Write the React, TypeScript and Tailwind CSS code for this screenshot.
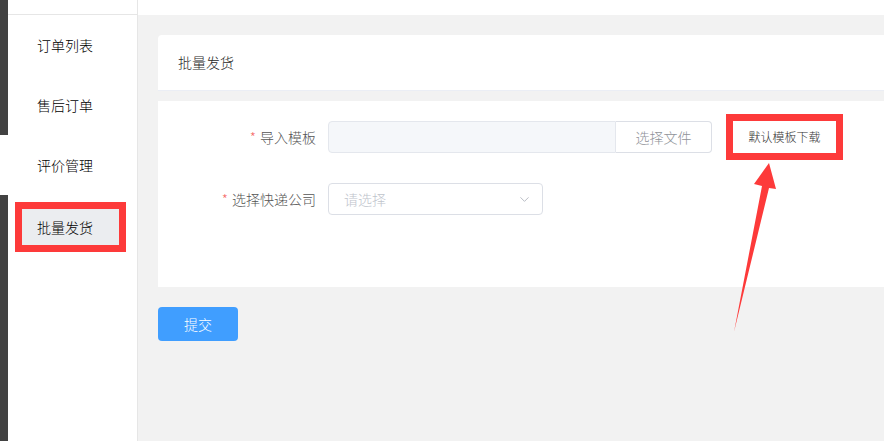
import { ChevronDown } from "lucide-react"

const font = { fontFamily: '"Noto Sans CJK SC", "Noto Sans", sans-serif' }

const menu = ["订单列表", "售后订单", "评价管理"]

export default function App() {
  return (
    <div className="relative flex w-[884px] h-[441px] overflow-hidden bg-white text-[14px]" style={font}>
      {/* left dark strip */}
      <div className="flex flex-col w-[8px] shrink-0">
        <div className="h-[135px] bg-[#424242]" />
        <div className="h-[60px] bg-white" />
        <div className="flex-1 bg-[#424242]" />
      </div>

      {/* sidebar */}
      <div className="flex flex-col w-[130px] shrink-0 border-r border-[#e6e6e6] bg-white">
        <div className="h-[15px] border-b border-[#e6e6e6]" />
        {menu.map((m) => (
          <div key={m} className="flex items-center h-[60px] pl-[29px] font-light text-black">
            {m}
          </div>
        ))}
        <div className="ml-[7px] mt-[7px] w-[111px] border-[7px] border-[#fd3a3a]">
          <div className="flex items-center h-[36px] pl-[15px] bg-[#ebedf0] font-light text-black">批量发货</div>
        </div>
      </div>

      {/* main */}
      <div className="flex flex-col flex-1 bg-[#f2f2f2]">
        <div className="h-[15px] bg-white shrink-0" />
        <div className="pl-[20px] pt-[20px] flex flex-col">
          <div className="flex items-center h-[56px] pl-[20px] bg-white rounded-tl-[4px] border-b border-[#ebeef5] font-light text-[#1f1f1f]">
            批量发货
          </div>
          <div className="mt-[10px] h-[186px] bg-white pt-[20px] font-light">
            <div className="flex items-center h-[32px]">
              <div className="w-[170px] pr-[12px] text-right text-[#555]">
                <span className="text-[#f56c6c] mr-[4px]">*</span>导入模板
              </div>
              <div className="flex h-[32px] w-[384px]">
                <div className="w-[288px] h-full bg-[#f5f7fa] border border-[#e4e7ed] rounded-l-[4px]" />
                <div className="flex items-center justify-center w-[96px] h-full border border-l-0 border-[#dcdfe6] rounded-r-[4px] text-[#909399]">
                  选择文件
                </div>
              </div>
              <div className="ml-[14px] border-[7px] border-[#fd3a3a]">
                <div className="flex items-center justify-center w-[103px] h-[32px] bg-white text-[12px] text-[#333]">
                  默认模板下载
                </div>
              </div>
            </div>
            <div className="flex items-center h-[32px] mt-[30px]">
              <div className="w-[170px] pr-[12px] text-right text-[#555]">
                <span className="text-[#f56c6c] mr-[4px]">*</span>选择快递公司
              </div>
              <div className="flex items-center justify-between w-[215px] h-[32px] pl-[15px] pr-[10px] border border-[#dcdfe6] rounded-[4px]">
                <span className="text-[#c0c4cc]">请选择</span>
                <ChevronDown size={15} strokeWidth={1.5} className="text-[#b4b8c0]" />
              </div>
            </div>
          </div>
          <div className="mt-[20px]">
            <div className="flex items-center justify-center w-[80px] h-[34px] rounded-[4px] bg-[#409eff] font-light text-white">
              提交
            </div>
          </div>
        </div>
      </div>

      {/* annotation arrow */}
      <svg className="absolute left-0 top-0 pointer-events-none" width="884" height="441">
        <polygon points="769,163 754,184 762,186 734,332 769,188 776,189" fill="#fd3a3a" />
      </svg>
    </div>
  )
}
